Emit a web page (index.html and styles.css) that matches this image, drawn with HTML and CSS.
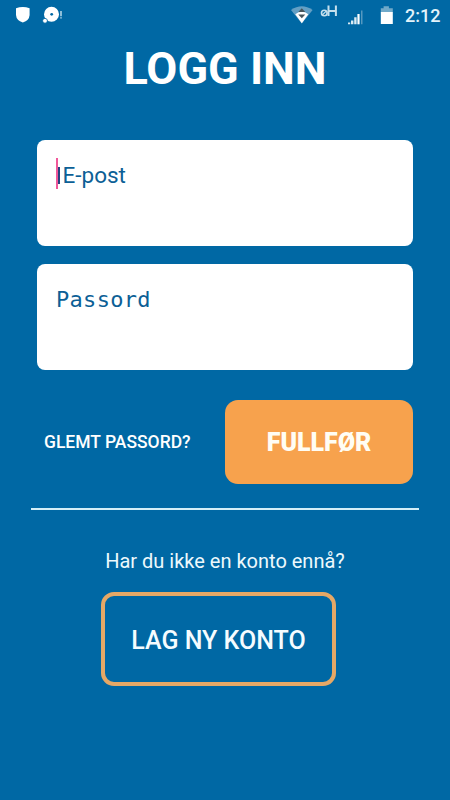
FILE: index.html
```
<!DOCTYPE html>
<html lang="no">
<head>
<meta charset="utf-8">
<title>Logg inn</title>
<link rel="stylesheet" href="styles.css">
</head>
<body>
<header class="status">
  <svg class="status-left" width="70" height="32" viewBox="0 0 70 32">
    <path d="M16 8.2Q22.8 5.8 29.6 8.2V15Q29.2 20.5 22.8 22.5Q16.4 20.5 16 15Z" fill="#fff"/>
    <circle cx="51.5" cy="14.2" r="7.5" fill="#fff"/>
    <circle cx="51.7" cy="14.3" r="1.4" fill="#0068a4"/>
    <circle cx="45" cy="20.8" r="2.4" fill="#fff" stroke="#0068a4" stroke-width=".8"/>
    <path d="M61 11v5.3M61 17.2v1.3" stroke="#d7edf5" stroke-width="1.3"/>
  </svg>
  <svg class="status-right" width="112" height="32" viewBox="0 0 112 32">
    <path d="M1 10Q11.8 2.5 22.6 10L11.8 23.5Z" fill="#639fc4"/>
    <path d="M5.3 14.2Q11.8 9.5 18.3 14.2L11.8 23.2Z" fill="#fff"/>
    <path d="M8.3 12L11.8 8.3L15.3 12ZM8.3 14.5H15.3L11.8 18.2Z" fill="#46555b"/>
    <circle cx="34.3" cy="13" r="2.8" fill="none" stroke="#c5e0ed" stroke-width="1.6"/>
    <path d="M32.3 15L36.3 11" fill="none" stroke="#c5e0ed" stroke-width="1.1"/>
    <path d="M38.5 5.5V16M38.5 10.9H45.5M45.9 5.5V16" fill="none" stroke="#c5e0ed" stroke-width="2"/>
    <path d="M58 24.3V22.5h2.2v1.8ZM61 24.3V20.5h2.4v3.8ZM64.2 24.3V17.3h2.4v7Z" fill="#d9eaf3"/>
    <path d="M67.4 24.3V14h2.2v10.3Z" fill="#fff"/>
    <path d="M71 24.3V10.5h1.5v13.8Z" fill="#5598bf"/>
    <path d="M90.8 8.2h2.8V6.3h5.3v1.9h3.9v4H90.8Z" fill="#70a9c9"/>
    <path d="M90.8 12H102.8V24H90.8Z" fill="#fff"/>
  </svg>
  <span class="clock">2:12</span>
</header>
<main class="login">
  <h1 class="title">LOGG INN</h1>
  <div class="field field-email"><i class="cursor"></i><i class="bar"></i><span>E-post</span></div>
  <div class="field field-password"><span>Passord</span></div>
  <div class="actions">
    <a class="forgot">GLEMT PASSORD?</a>
    <button class="submit">FULLFØR</button>
  </div>
  <hr class="divider">
  <p class="question">Har du ikke en konto ennå?</p>
  <button class="create">LAG NY KONTO</button>
</main>
</body>
</html>
```
FILE: styles.css
```
* { box-sizing: border-box; }
body {
  margin: 0;
  height: 800px;
  overflow: hidden;
  background: #0068a4;
  color: #fff;
  font-family: Roboto, "Liberation Sans", sans-serif;
}
.status { display: flex; height: 32px; }
.status-right { margin-left: 220px; }
.clock {
  margin-left: 3px;
  font-size: 18px;
  line-height: 32px;
  font-weight: 500;
  color: #e3f3fa;
  white-space: nowrap;
}
.login { display: flex; flex-direction: column; }
.title {
  margin: 10px 0 0;
  height: 54px;
  line-height: 54px;
  text-align: center;
  font-size: 45px;
  font-weight: 700;
}
.field {
  display: flex;
  width: 376px;
  height: 105.5px;
  margin-left: 37px;
  border-radius: 8px;
  background: #fff;
  color: #0c5f96;
  padding: 18px 19px;
  font-size: 22.5px;
  line-height: 35px;
}
.field-email { margin-top: 44px; }
.cursor { width: 2px; height: 31px; background: #f0589a; }
.bar { width: 2px; height: 17px; margin: 9px 2.5px 0 0; background: #26427f; }
.field-password {
  margin-top: 18.5px;
  font-family: "DejaVu Sans Mono", monospace;
  font-size: 22px;
  letter-spacing: .3px;
}
.actions {
  display: flex;
  align-items: center;
  margin: 30px 37px 0 44px;
  height: 84px;
}
.forgot { width: 181px; font-size: 17.5px; font-weight: 500; white-space: nowrap; }
.submit {
  width: 188px;
  height: 84px;
  padding: 1px 0 0;
  border: 0;
  border-radius: 13px;
  background: #f7a24d;
  color: #fffdf4;
  font: 900 25px Roboto, sans-serif;
}
.divider {
  width: 388px;
  height: 2px;
  margin: 24.5px 0 0 31px;
  border: 0;
  background: #d4eef7;
}
.question {
  margin: 38px 0 0;
  text-align: center;
  font-size: 20px;
  line-height: 26px;
  color: #edf9fd;
}
.create {
  width: 235px;
  height: 94px;
  margin: 18px 0 0 101px;
  padding: 2px 0 0;
  border: 4px solid #e5a866;
  border-radius: 13px;
  background: none;
  color: #f5fcff;
  font: 500 25px Roboto, sans-serif;
}
```
